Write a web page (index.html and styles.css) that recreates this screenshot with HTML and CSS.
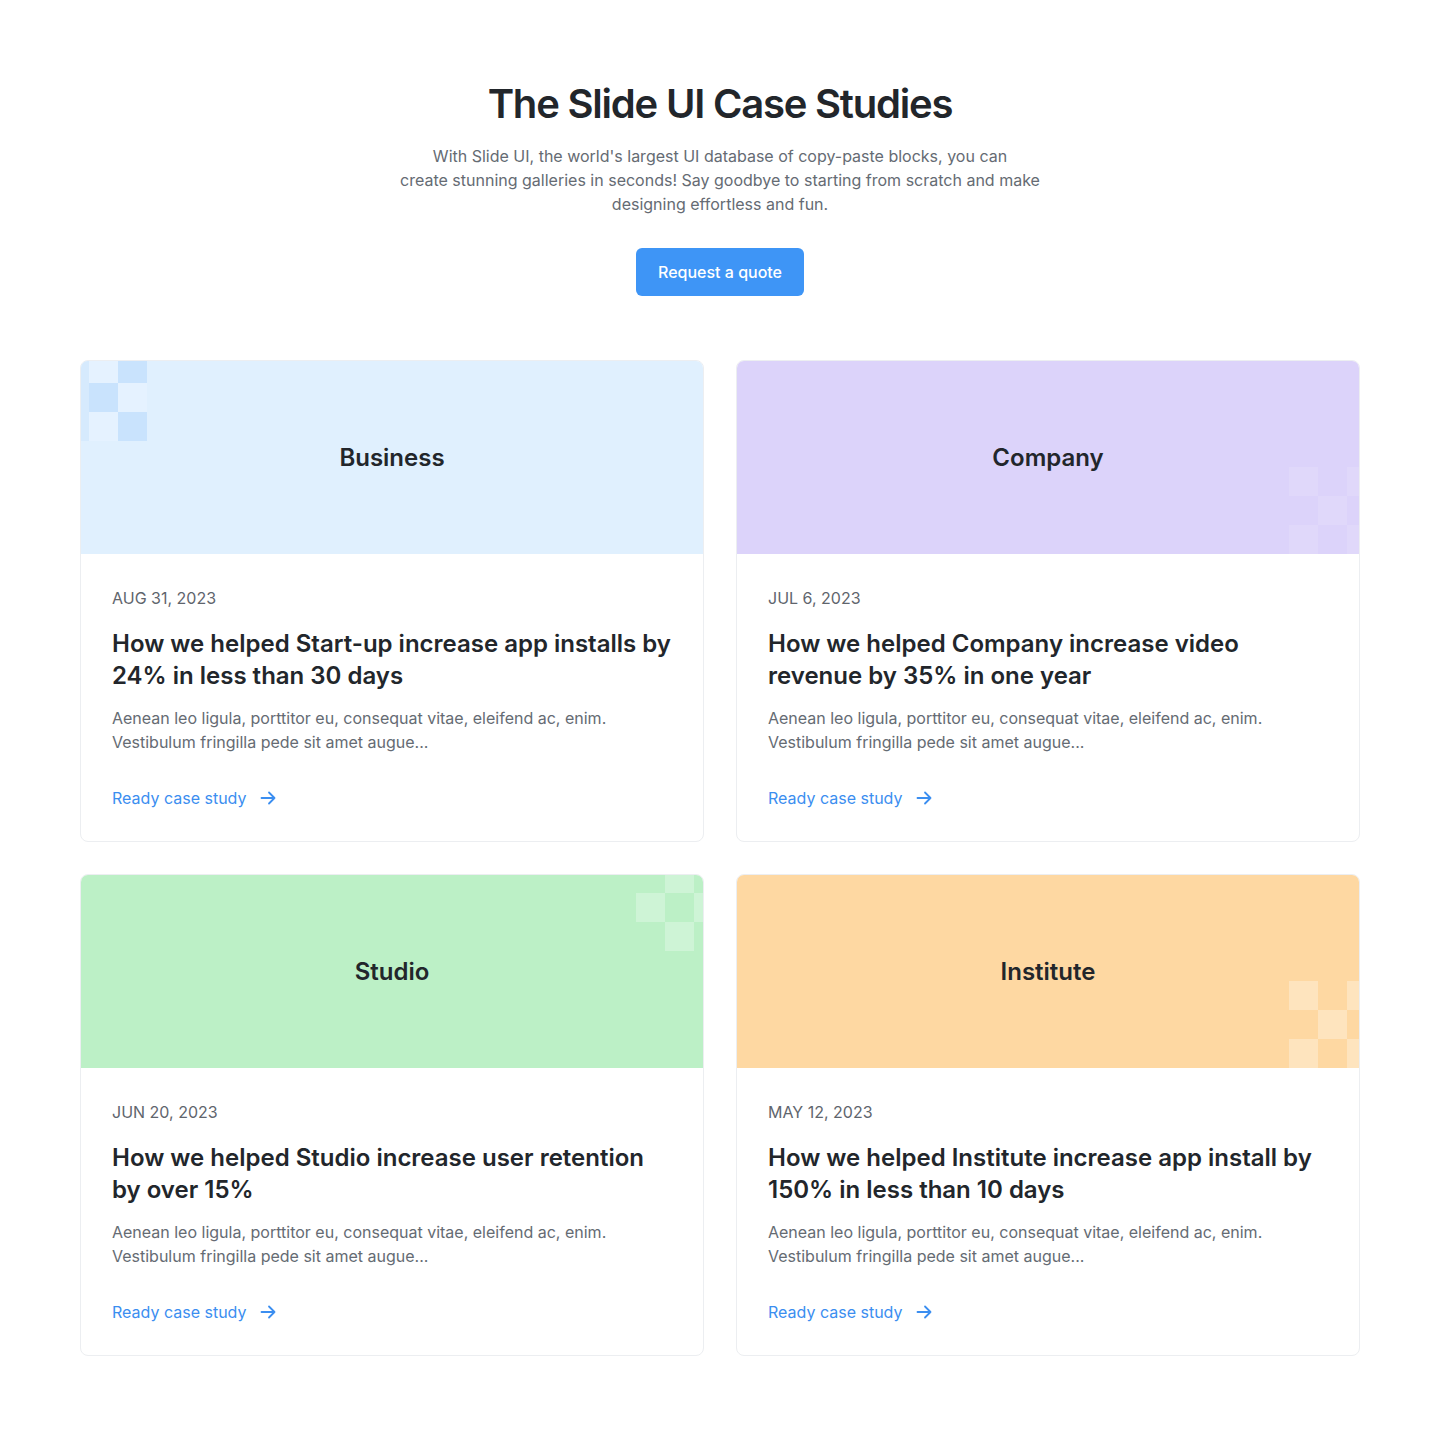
FILE: index.html
```html
<!DOCTYPE html>
<html lang="en">
<head>
<meta charset="utf-8">
<title>The Slide UI Case Studies</title>
<link rel="stylesheet" href="styles.css">
</head>
<body>
<main class="page">
  <header class="intro">
    <h1 class="intro-title">The Slide UI Case Studies</h1>
    <p class="intro-text">With Slide UI, the world's largest UI database of copy-paste blocks, you can<br>create stunning galleries in seconds! Say goodbye to starting from scratch and make designing effortless and fun.</p>
    <a class="btn" href="#">Request a quote</a>
  </header>

  <section class="grid">
    <article class="card">
      <div class="cover cover-blue">
        <div class="deco deco-tl">
          <span class="sq b"></span><span class="sq c"></span><span class="sq a"></span>
          <span class="sq b"></span><span class="sq a"></span><span class="sq c"></span>
          <span class="sq b"></span><span class="sq c"></span><span class="sq a"></span>
        </div>
        <h2 class="cover-label">Business</h2>
      </div>
      <div class="body">
        <p class="date">AUG 31, 2023</p>
        <h3 class="card-title">How we helped Start-up increase app installs by 24% in less than 30 days</h3>
        <p class="desc">Aenean leo ligula, porttitor eu, consequat vitae, eleifend ac, enim. Vestibulum fringilla pede sit amet augue...</p>
        <a class="link" href="#">Ready case study <svg width="20" height="20" viewBox="0 0 20 20" fill="none" stroke="currentColor" stroke-width="1.8" stroke-linecap="round" stroke-linejoin="round"><path d="M3.5 10h13M11 4.5l5.5 5.5-5.5 5.5"/></svg></a>
      </div>
    </article>

    <article class="card">
      <div class="cover cover-purple">
        <div class="deco deco-br">
          <span class="sq w"></span><span class="sq"></span><span class="sq w"></span>
          <span class="sq"></span><span class="sq w"></span><span class="sq"></span>
          <span class="sq w"></span><span class="sq"></span><span class="sq w"></span>
        </div>
        <h2 class="cover-label">Company</h2>
      </div>
      <div class="body">
        <p class="date">JUL 6, 2023</p>
        <h3 class="card-title">How we helped Company increase video revenue by 35% in one year</h3>
        <p class="desc">Aenean leo ligula, porttitor eu, consequat vitae, eleifend ac, enim. Vestibulum fringilla pede sit amet augue...</p>
        <a class="link" href="#">Ready case study <svg width="20" height="20" viewBox="0 0 20 20" fill="none" stroke="currentColor" stroke-width="1.8" stroke-linecap="round" stroke-linejoin="round"><path d="M3.5 10h13M11 4.5l5.5 5.5-5.5 5.5"/></svg></a>
      </div>
    </article>

    <article class="card">
      <div class="cover cover-green">
        <div class="deco deco-tr">
          <span class="sq"></span><span class="sq w"></span><span class="sq"></span>
          <span class="sq w"></span><span class="sq"></span><span class="sq w"></span>
          <span class="sq"></span><span class="sq w"></span><span class="sq"></span>
        </div>
        <h2 class="cover-label">Studio</h2>
      </div>
      <div class="body">
        <p class="date">JUN 20, 2023</p>
        <h3 class="card-title">How we helped Studio increase user retention by over 15%</h3>
        <p class="desc">Aenean leo ligula, porttitor eu, consequat vitae, eleifend ac, enim. Vestibulum fringilla pede sit amet augue...</p>
        <a class="link" href="#">Ready case study <svg width="20" height="20" viewBox="0 0 20 20" fill="none" stroke="currentColor" stroke-width="1.8" stroke-linecap="round" stroke-linejoin="round"><path d="M3.5 10h13M11 4.5l5.5 5.5-5.5 5.5"/></svg></a>
      </div>
    </article>

    <article class="card">
      <div class="cover cover-orange">
        <div class="deco deco-br">
          <span class="sq w"></span><span class="sq"></span><span class="sq w"></span>
          <span class="sq"></span><span class="sq w"></span><span class="sq"></span>
          <span class="sq w"></span><span class="sq"></span><span class="sq w"></span>
        </div>
        <h2 class="cover-label">Institute</h2>
      </div>
      <div class="body">
        <p class="date">MAY 12, 2023</p>
        <h3 class="card-title">How we helped Institute increase app install by 150% in less than 10 days</h3>
        <p class="desc">Aenean leo ligula, porttitor eu, consequat vitae, eleifend ac, enim. Vestibulum fringilla pede sit amet augue...</p>
        <a class="link" href="#">Ready case study <svg width="20" height="20" viewBox="0 0 20 20" fill="none" stroke="currentColor" stroke-width="1.8" stroke-linecap="round" stroke-linejoin="round"><path d="M3.5 10h13M11 4.5l5.5 5.5-5.5 5.5"/></svg></a>
      </div>
    </article>
  </section>
</main>
</body>
</html>
```

FILE: styles.css
```css
* { box-sizing: border-box; }
html, body { margin: 0; padding: 0; background: #fff; }
body {
  font-family: Inter, "Noto Sans", "Liberation Sans", sans-serif;
  color: #22262b;
  -webkit-font-smoothing: antialiased;
}
.page {
  width: 1280px;
  margin: 0 auto;
  padding: 80px 0 80px;
}
.intro {
  display: flex;
  flex-direction: column;
  align-items: center;
  text-align: center;
}
.intro-title {
  margin: 0;
  font-size: 40px;
  line-height: 48px;
  font-weight: 600;
  letter-spacing: -1.2px;
  color: #22262b;
}
.intro-text {
  margin: 16px 0 0;
  max-width: 660px;
  font-size: 16px;
  line-height: 24px;
  color: #656b73;
}
.btn {
  margin-top: 32px;
  display: inline-flex;
  align-items: center;
  justify-content: center;
  height: 48px;
  padding: 0 22px;
  border-radius: 6px;
  background: #3e95f6;
  color: #fff;
  font-size: 16px;
  font-weight: 500;
  text-decoration: none;
}
.grid {
  margin-top: 64px;
  display: grid;
  grid-template-columns: 1fr 1fr;
  gap: 32px;
}
.card {
  border: 1px solid #eceef1;
  border-radius: 8px;
  overflow: hidden;
  background: #fff;
  display: flex;
  flex-direction: column;
}
.cover {
  position: relative;
  height: 193px;
  display: flex;
  align-items: center;
  justify-content: center;
  overflow: hidden;
}
.cover-blue { background: #e0f0fe; }
.cover-purple { background: #dcd3fa; }
.cover-green { background: #bcf0c6; }
.cover-orange { background: #fed8a2; }
.cover-label {
  position: relative;
  margin: 0;
  font-size: 24px;
  line-height: 32px;
  font-weight: 600;
  color: #22262b;
}
.deco {
  position: absolute;
  display: grid;
  grid-template-columns: repeat(3, 29px);
  grid-template-rows: repeat(3, 29px);
}
.deco-tl { left: -21px; top: -7px; }
.deco-br { right: -17px; bottom: 0; }
.deco-tr { right: -20px; top: -11px; }
.sq { display: block; }
.deco-tl .a { background: #c9e3fd; }
.deco-tl .b { background: #d6eafd; }
.deco-tl .c { background: #e5f2ff; }
.cover-purple .sq.w { background: rgba(255, 255, 255, 0.13); }
.cover-green .sq.w { background: rgba(255, 255, 255, 0.28); }
.cover-orange .sq.w { background: rgba(255, 255, 255, 0.3); }
.body {
  padding: 32px 31px 31px;
  display: flex;
  flex-direction: column;
  align-items: flex-start;
}
.date {
  margin: 0;
  font-size: 16px;
  line-height: 24px;
  color: #5f656d;
}
.card-title {
  margin: 18px 0 0;
  font-size: 24px;
  line-height: 32px;
  font-weight: 600;
  color: #22262b;
  letter-spacing: 0;
}
.desc {
  margin: 14px 0 0;
  font-size: 16px;
  line-height: 24px;
  color: #656b73;
}
.link {
  margin-top: 32px;
  display: inline-flex;
  align-items: center;
  gap: 12px;
  font-size: 16px;
  line-height: 24px;
  color: #3b8ef0;
  text-decoration: none;
}
.link svg { display: block; }
```
